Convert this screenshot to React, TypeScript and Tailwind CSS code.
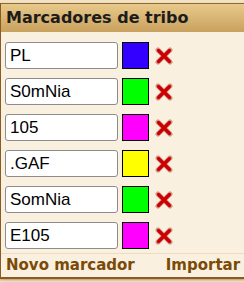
import React from 'react';

interface Marker {
  id: number;
  name: string;
  color: string;
}

const markers: Marker[] = [
  { id: 1, name: 'PL', color: '#3300ff' },
  { id: 2, name: 'S0mNia', color: '#00ff00' },
  { id: 3, name: '105', color: '#ff00ff' },
  { id: 4, name: '.GAF', color: '#ffff00' },
  { id: 5, name: 'SomNia', color: '#00ff00' },
  { id: 6, name: 'E105', color: '#ff00ff' },
];

const DeleteIcon: React.FC = () => (
  <svg width="18" height="18" viewBox="0 0 18 18">
    <path d="M3 3 L15 15 M15 3 L3 15" stroke="#8a0000" strokeWidth="5" strokeLinecap="round" opacity="0.35" />
    <path d="M3.5 3.5 L14.5 14.5 M14.5 3.5 L3.5 14.5" stroke="#cc0000" strokeWidth="3.4" strokeLinecap="round" />
  </svg>
);

const App: React.FC = () => {
  return (
    <div className="w-[244px] h-[282px] overflow-hidden bg-[#f3e3c3] pt-[3px]" style={{ fontFamily: '"DejaVu Sans", Verdana, sans-serif' }}>
      <div className="w-[250px] bg-[#faf0df] border-l border-b-2 border-[#8a5a22] shadow-[0_1px_2px_rgba(120,80,30,0.5)]">
        {/* Header */}
        <div className="h-[29px] border-t border-[#8a6a3a] bg-gradient-to-b from-[#e8c98a] to-[#c9a15f] flex items-center pl-[5px]">
          <h2 className="text-[16px] font-bold text-[#1c1c1c] leading-none">Marcadores de tribo</h2>
        </div>

        {/* Marker rows */}
        <div className="flex flex-col gap-[9px] pt-[10px] pl-[4px] pb-[4px]">
          {markers.map((m) => (
            <div key={m.id} className="flex items-center h-[27px]">
              <input
                defaultValue={m.name}
                className="w-[113px] h-[27px] bg-white border border-[#8c8c8c] rounded-[3px] px-[4px] text-[17px] text-black outline-none"
                style={{ fontFamily: '"Liberation Sans", Arial, sans-serif' }}
              />
              <div className="ml-[4px] w-[27px] h-[27px] border border-black" style={{ backgroundColor: m.color }} />
              <div className="ml-[6px] flex items-center">
                <DeleteIcon />
              </div>
            </div>
          ))}
        </div>

        {/* Footer */}
        <div className="border-t border-[#eedcbc] flex items-center h-[24px] pl-[5px]">
          <span className="text-[15px] font-bold text-[#7a4a08]">Novo marcador</span>
          <span className="ml-[31px] text-[15px] font-bold text-[#7a4a08]">Importar</span>
        </div>
      </div>
    </div>
  );
};

export default App;
